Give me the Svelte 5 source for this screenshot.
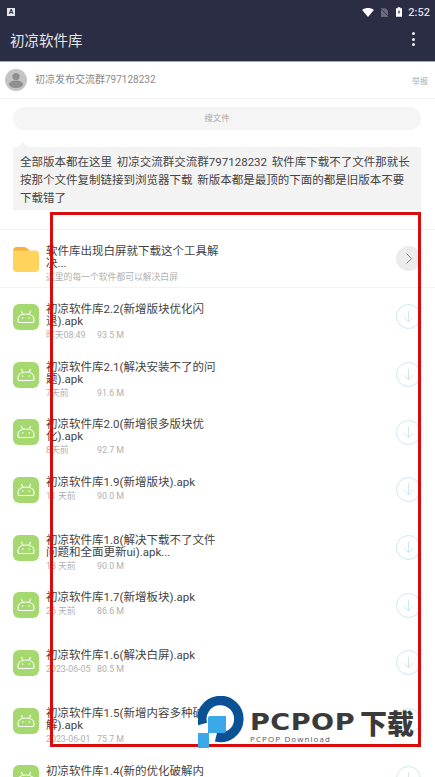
<script>
  const files = [
    { name: "初凉软件库2.2(新增版块优化闪退).apk", time: "昨天08:49", size: "93.5 M" },
    { name: "初凉软件库2.1(解决安装不了的问题).apk", time: "7天前", size: "91.6 M" },
    { name: "初凉软件库2.0(新增很多版块优化).apk", time: "8天前", size: "92.7 M" },
    { name: "初凉软件库1.9(新增版块).apk", time: "11 天前", size: "90.0 M" },
    { name: "初凉软件库1.8(解决下载不了文件问题和全面更新ui).apk...", time: "18 天前", size: "90.0 M" },
    { name: "初凉软件库1.7(新增板块).apk", time: "26 天前", size: "86.6 M" },
    { name: "初凉软件库1.6(解决白屏).apk", time: "2023-06-05", size: "80.5 M" },
    { name: "初凉软件库1.5(新增内容多种破解).apk", time: "2023-06-01", size: "75.7 M" },
    { name: "初凉软件库1.4(新的优化破解内容).apk", time: "2023-05-28", size: "75.0 M" }
  ];
</script>

<div class="page">
  <!-- status bar -->
  <div class="status">
    <span class="a-badge">A</span>
    <span class="spacer"></span>
    <svg class="wifi" width="12" height="9" viewBox="0 0 13 10"><path d="M0 2.2 C3.6 -0.6 9.4 -0.6 13 2.2 L6.5 10 Z" fill="#fff"/></svg>
    <svg class="sim" width="7" height="9" viewBox="0 0 8 10"><path d="M0 0 H5 L8 3 V10 H0 Z" fill="#6a6c7c"/><path d="M0 1 L8 9" stroke="#2a2d43" stroke-width="0.8"/></svg>
    <svg class="batt" width="6" height="10" viewBox="0 0 7 11"><path d="M2 0 H5 V1 H7 V11 H0 V1 H2 Z" fill="#fff"/><path d="M4 2.5 L2 6 H3.4 L3 8.8 L5 5 H3.6 Z" fill="#2a2d43"/></svg>
    <span class="clock">2:52</span>
  </div>

  <!-- toolbar -->
  <div class="toolbar">
    <span class="title">初凉软件库</span>
    <span class="dots"><i></i><i></i><i></i></span>
  </div>

  <!-- publisher row -->
  <div class="author">
    <svg class="avatar" width="22" height="22" viewBox="0 0 22 22">
      <circle cx="11" cy="11" r="11" fill="#c4c4c4"/>
      <circle cx="11" cy="7.6" r="3.6" fill="#8f8f8f"/>
      <ellipse cx="11" cy="15.2" rx="7" ry="3.8" fill="#8f8f8f"/>
    </svg>
    <span class="author-name">初凉发布交流群797128232</span>
    <span class="report">举报</span>
  </div>

  <div class="search">搜文件</div>

  <div class="bubble">
    全部版本都在这里 初凉交流群交流群797128232 软件库下载不了文件那就长按那个文件复制链接到浏览器下载 新版本都是最顶的下面的都是旧版本不要下载错了
  </div>

  <div class="list">
    <div class="row folder-row">
      <svg class="file-icon" width="26" height="26" viewBox="0 0 26 26">
        <path d="M0 5 Q0 1 4 1 H11 Q13 1 15 3 L17 5 Z" fill="#f5b13d"/>
        <path d="M0 7 Q0 4.5 3 4.5 H22 Q26 4.5 26 8 V22 Q26 26 22 26 H4 Q0 26 0 22 Z" fill="#ffd35c"/>
      </svg>
      <div class="info">
        <div class="name">软件库出现白屏就下载这个工具解决...</div>
        <div class="meta">这里的每一个软件都可以解决白屏</div>
      </div>
      <svg class="action" width="25" height="25" viewBox="0 0 25 25">
        <circle cx="12.5" cy="12.5" r="12.5" fill="#ececec"/>
        <path d="M10.5 7.5 L15.5 12.5 L10.5 17.5" fill="none" stroke="#777" stroke-width="0.9"/>
      </svg>
    </div>

    {#each files as file}
      <div class="row">
        <svg class="file-icon" width="26" height="26" viewBox="0 0 26 26">
          <rect width="26" height="26" rx="6" fill="#a5d96f"/>
          <path d="M5 15.5 C5 12 8.5 10 13 10 C17.5 10 21 12 21 15.5 V17 Q21 18.5 19.5 18.5 H6.5 Q5 18.5 5 17 Z" fill="none" stroke="#fff" stroke-width="1.1" stroke-linejoin="round"/>
          <path d="M8.4 7.2 L10 10.4 M17.6 7.2 L16 10.4" stroke="#fff" stroke-width="1.1" stroke-linecap="round"/>
          <circle cx="9.8" cy="14" r="0.8" fill="#fff"/>
          <circle cx="16.2" cy="14" r="0.8" fill="#fff"/>
        </svg>
        <div class="info">
          <div class="name">{file.name}</div>
          <div class="meta"><span class="time">{file.time}</span><span>{file.size}</span></div>
        </div>
        <svg class="action" width="25" height="25" viewBox="0 0 25 25">
          <circle cx="12.5" cy="12.5" r="12" fill="none" stroke="#c4e6ef" stroke-width="0.9"/>
          <path d="M12.5 6.5 V17.5 M8 13.2 L12.5 17.7 L17 13.2" fill="none" stroke="#c4e6ef" stroke-width="0.9"/>
        </svg>
      </div>
    {/each}
  </div>

  <!-- annotation frame and watermark lie over the page -->
  <div class="frame"></div>
  <div class="watermark">
    <svg class="wm-logo" width="48" height="53" viewBox="0 0 48 53">
      <path d="M4.5 28 A18.5 18.5 0 1 1 18 41" fill="none" stroke="#0b5295" stroke-width="9.5"/>
      <path d="M10 22 Q10 20 12 20 H28 V35 Q28 37 26 37 H10 Z" fill="#3aa9e8"/>
      <rect x="0" y="37" width="11" height="15" fill="#3aa9e8"/>
    </svg>
    <div class="wm-text">
      <div class="wm-big"><span class="wm-en">PCPOP</span><span class="wm-cn">下载</span></div>
      <div class="wm-small">PCPOP Download</div>
    </div>
  </div>
</div>

<style>
  :global(body) {
    background: #fff;
  }

  .page {
    position: relative;
    width: 435px;
    height: 777px;
    overflow: hidden;
    background: #fff;
    font-family: Roboto, "Noto Sans CJK SC", sans-serif;
  }

  .status {
    height: 24px;
    background: #2a2d43;
    display: flex;
    align-items: center;
    padding: 0 5px 0 7px;
    box-sizing: border-box;
  }

  .a-badge {
    width: 8px;
    height: 8px;
    background: #e8e8ea;
    color: #2a2d43;
    font-size: 7px;
    font-weight: 700;
    line-height: 8px;
    text-align: center;
  }

  .spacer {
    flex: 1;
  }

  .sim {
    margin-left: 7px;
  }

  .batt {
    margin-left: 8px;
  }

  .clock {
    color: #dcdde2;
    font-size: 11px;
    font-weight: 500;
    margin-left: 6px;
  }

  .toolbar {
    height: 38px;
    background: #2a2d43;
    border-bottom: 1px solid #a9a9b2;
    box-sizing: border-box;
    display: flex;
    align-items: center;
    justify-content: space-between;
    padding: 0 20px 7px 10px;
  }

  .title {
    color: #e6e6ea;
    font-size: 14.5px;
  }

  .dots {
    display: flex;
    flex-direction: column;
    gap: 2.5px;
  }

  .dots i {
    display: block;
    width: 3px;
    height: 3px;
    border-radius: 50%;
    background: #f0f0f2;
  }

  .author {
    height: 37px;
    box-sizing: border-box;
    border-bottom: 1px solid #f0f0f0;
    display: flex;
    align-items: center;
    padding: 0 7px 0 5px;
  }

  .author-name {
    margin-left: 8px;
    font-size: 10px;
    color: #8a8a8a;
    flex: 1;
    margin-top: -3px;
  }

  .report {
    font-size: 8px;
    color: #aaa;
  }

  .search {
    margin: 8px 14px 0 13px;
    height: 23px;
    line-height: 23px;
    border-radius: 12px;
    background: #f5f5f5;
    color: #aaa;
    font-size: 8.5px;
    text-align: center;
  }

  .bubble {
    position: relative;
    margin: 17px 14px 0 13px;
    padding: 6px 9px 3px 7px;
    height: 63px;
    box-sizing: border-box;
    background: #f3f3f3;
    color: #444;
    font-size: 11.5px;
    line-height: 18px;
    word-spacing: 2px;
  }

  .bubble::before {
    content: "";
    position: absolute;
    left: 5px;
    top: -5px;
    border: 5px solid transparent;
    border-top: 0;
    border-bottom-color: #f3f3f3;
  }

  .list {
    margin-top: 19px;
    border-top: 1px solid #f3f3f3;
  }

  .row {
    height: 57.7px;
    box-sizing: border-box;
    display: flex;
    align-items: center;
    padding: 0 14px 0 13px;
  }

  .folder-row {
    border-bottom: 1px solid #f3f3f3;
    height: 58px;
  }

  .file-icon {
    flex: none;
  }

  .info {
    flex: 1;
    align-self: flex-start;
    margin-left: 7px;
    padding-top: 15px;
    min-width: 0;
  }

  .name {
    width: 175px;
    font-size: 11.5px;
    line-height: 12px;
    color: #444;
  }

  .meta {
    margin-top: 2px;
    height: 12px;
    font-size: 8.8px;
    line-height: 12px;
    color: #b0b0b0;
    white-space: nowrap;
  }

  .time {
    display: inline-block;
    width: 51px;
  }

  .action {
    flex: none;
  }

  .frame {
    position: absolute;
    left: 50px;
    top: 212px;
    width: 371px;
    height: 535px;
    box-sizing: border-box;
    border: 3px solid #d90b0b;
  }

  .watermark {
    position: absolute;
    left: 198px;
    top: 696px;
    display: flex;
  }

  .wm-text {
    margin-left: 4px;
    padding-top: 15px;
  }

  .wm-big {
    font-family: "DejaVu Sans", "Noto Sans CJK SC", sans-serif;
    font-weight: 700;
    line-height: 23px;
    height: 23px;
    color: #3a3a3a;
    white-space: nowrap;
    display: flex;
    align-items: center;
  }

  /* the logo's letters are wider than any installed bold */
  .wm-en {
    display: inline-block;
    width: 110px;
    font-size: 23px;
    letter-spacing: 0.4px;
    transform: scaleX(1.18);
    transform-origin: left center;
  }

  .wm-cn {
    font-family: "Noto Sans CJK SC", sans-serif;
    font-weight: 900;
    font-size: 27px;
  }

  .wm-small {
    font-family: "Open Sans", sans-serif;
    font-size: 8px;
    line-height: 9px;
    letter-spacing: 1.1px;
    color: #555;
    white-space: nowrap;
  }
</style>
